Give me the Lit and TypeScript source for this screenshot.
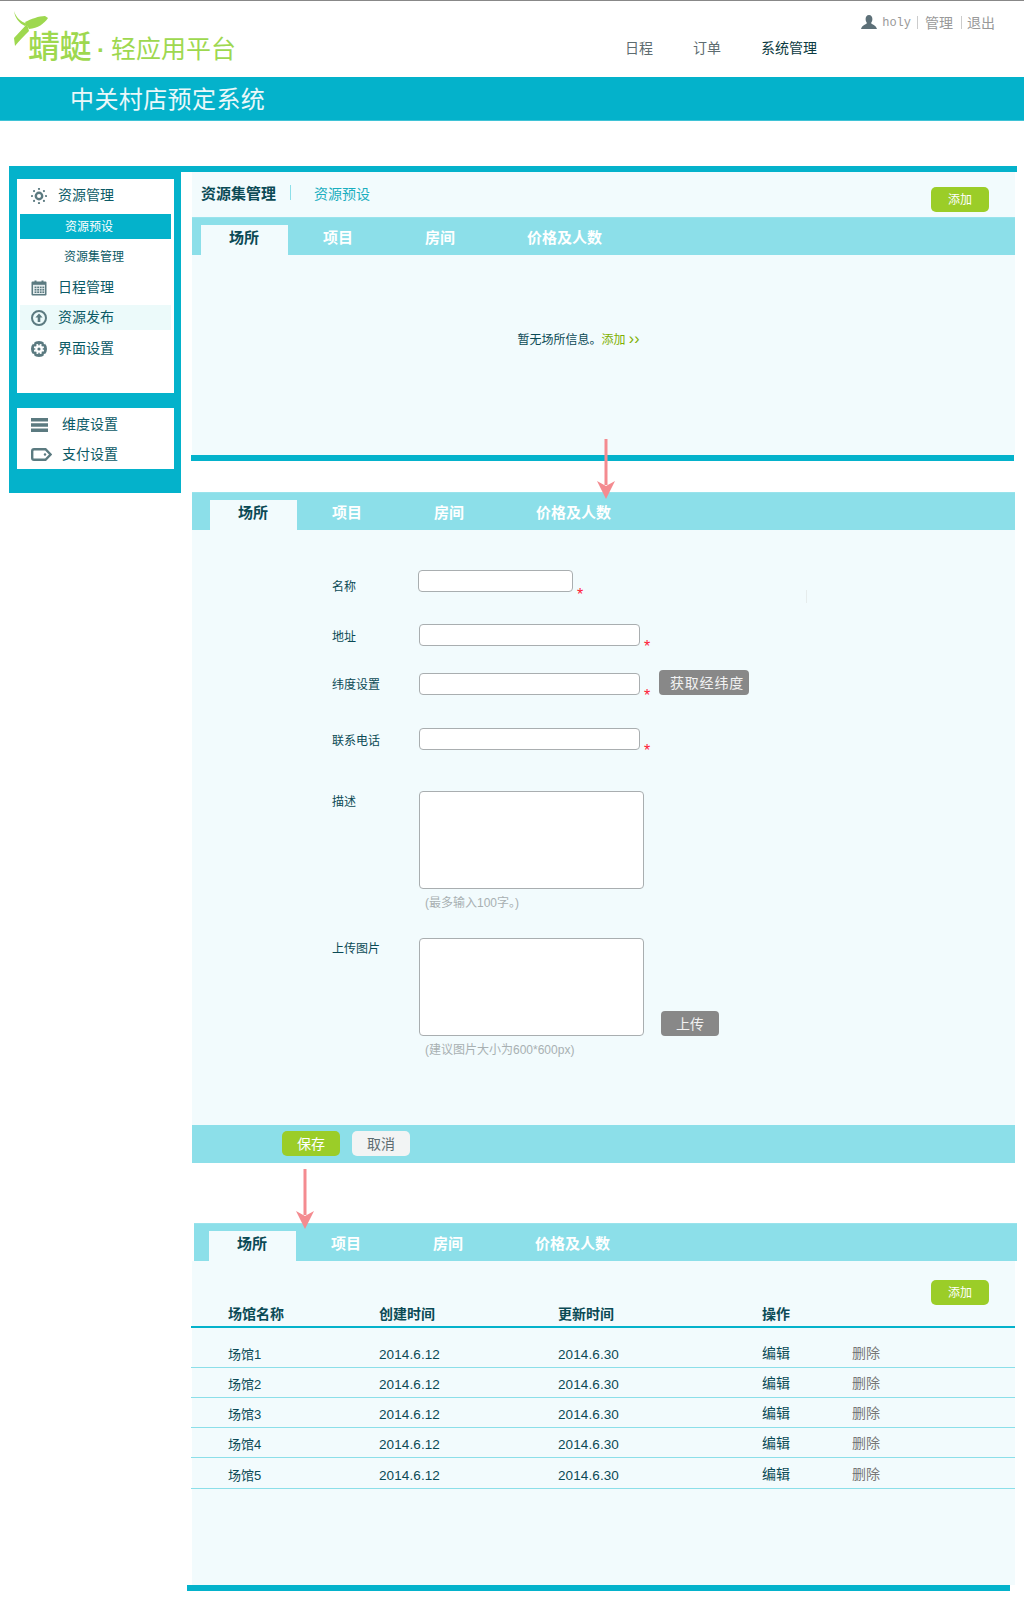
import { LitElement, html, css, svg } from 'lit';
import { customElement } from 'lit/decorators.js';
import { classMap } from 'lit/directives/class-map.js';

const TABS = ['场所', '项目', '房间', '价格及人数'];
const VENUES = ['场馆1', '场馆2', '场馆3', '场馆4', '场馆5'];

const gearDots = [0, 45, 90, 135, 180, 225, 270, 315];
const rad = (a: number) => (a * Math.PI) / 180;
const gridCols = [3.6, 6.2, 8.8, 11.4];
const gridRows = [6.6, 9, 11.4];

const icons = {
  sun: svg`<svg class="icon" width="16" height="16" viewBox="0 0 16 16"><circle cx="8" cy="8" r="3.2" fill="none" stroke="#5b7a80" stroke-width="2.4"/>${gearDots.map(
    (a) =>
      svg`<circle cx="${8 + 7 * Math.cos(rad(a))}" cy="${8 + 7 * Math.sin(rad(a))}" r="1.1" fill="#5b7a80"/>`
  )}</svg>`,
  calendar: svg`<svg class="icon" width="16" height="16" viewBox="0 0 16 16"><path d="M1.5 1.5h2V0.5h2v1h5V0.5h2v1h2a1 1 0 0 1 1 1v12a1 1 0 0 1-1 1H1.5a1 1 0 0 1-1-1v-12a1 1 0 0 1 1-1z" fill="#5b7a80"/><rect x="2" y="4.8" width="12" height="9.2" fill="#e4eced"/>${gridRows.map((y) =>
    gridCols.map(
      (x) => svg`<rect x="${x}" y="${y}" width="1.8" height="1.6" fill="#5b7a80"/>`
    )
  )}</svg>`,
  upload: svg`<svg class="icon" width="16" height="16" viewBox="0 0 16 16"><circle cx="8" cy="8" r="7" fill="none" stroke="#5b7a80" stroke-width="2"/><path d="M8 3.6L11.6 7.6H9.3V12H6.7V7.6H4.4z" fill="#5b7a80"/></svg>`,
  cog: svg`<svg class="icon" width="16" height="16" viewBox="0 0 16 16"><circle cx="8" cy="8" r="8" fill="#5b7a80"/><g fill="#fff"><circle cx="8" cy="8" r="3.8"/>${gearDots.map(
    (a) =>
      svg`<circle cx="${8 + 4.3 * Math.cos(rad(a + 22))}" cy="${8 + 4.3 * Math.sin(rad(a + 22))}" r="1.1"/>`
  )}${[45, 135, 225, 315].map(
    (a) =>
      svg`<circle cx="${8 + 8 * Math.cos(rad(a))}" cy="${8 + 8 * Math.sin(rad(a))}" r="1"/>`
  )}</g><circle cx="8" cy="8" r="1.6" fill="#5b7a80"/></svg>`,
  bars: svg`<svg class="icon wide" width="17" height="14" viewBox="0 0 17 14"><path d="M0 0h17v3.4H0zM0 5.2h17v3.6H0zM0 10.6h17V14H0z" fill="#5b7a80"/></svg>`,
  tag: svg`<svg class="icon tag" width="21" height="13" viewBox="0 0 21 13"><path d="M3 1.2H14.5L19.6 6.5L14.5 11.8H3A1.8 1.8 0 0 1 1.2 10V3A1.8 1.8 0 0 1 3 1.2z" fill="none" stroke="#5b7a80" stroke-width="2.4"/><circle cx="14" cy="6.5" r="1.2" fill="#5b7a80"/></svg>`,
};

@customElement('app-root')
export class AppRoot extends LitElement {
  static styles = css`
    :host {
      display: block;
      position: relative;
      width: 1024px;
      height: 1616px;
      overflow: hidden;
      background: #fff;
      font-family: 'Liberation Sans', 'Noto Sans CJK SC', sans-serif;
      font-size: 12px;
      color: #0b4a55;
    }
    /* header */
    header {
      display: flex;
      height: 76px;
      border-top: 1px solid #888;
    }
    .logo {
      position: relative;
      width: 240px;
      flex: none;
      display: flex;
      align-items: baseline;
      padding: 28px 0 0 28px;
      box-sizing: border-box;
      color: #9ed84f;
      line-height: 36px;
    }
    .logo b {
      font-size: 32px;
      font-weight: 500;
      letter-spacing: -0.5px;
    }
    .logo i {
      font-style: normal;
      font-size: 24px;
      font-weight: 700;
      width: 20px;
      text-align: center;
    }
    .logo span {
      font-size: 25px;
      font-weight: 400;
    }
    .logo svg {
      position: absolute;
      left: 0;
      top: 0;
    }
    .head-right {
      flex: 1;
      display: flex;
      flex-direction: column;
    }
    .user {
      display: flex;
      align-items: center;
      justify-content: flex-end;
      height: 16px;
      margin-top: 13px;
      padding-right: 29px;
      font-size: 14px;
      color: #999;
    }
    .user svg {
      margin-right: 5px;
    }
    .user .name {
      font-family: 'Liberation Mono', monospace;
      font-size: 12px;
      margin: 2px 6px 0 0;
    }
    .user .sep {
      width: 1px;
      height: 13px;
      background: #ccc;
    }
    .user .gap1 {
      margin-right: 7px;
    }
    .user .gap2 {
      margin: 0 5px 0 8px;
    }
    nav {
      display: flex;
      gap: 40px;
      margin-top: 9px;
      padding-left: 385px;
      font-size: 14px;
      line-height: 18px;
      color: #5d6c70;
    }
    nav .on {
      color: #0b3a42;
    }
    .band {
      height: 44px;
      box-sizing: border-box;
      padding: 2px 0 0 70px;
      background: #04b2cb;
      border-bottom: 1px solid #3fc3d6;
      color: #eaf8fa;
      font-size: 24px;
      letter-spacing: 0.4px;
      line-height: 41px;
    }
    /* frame */
    .frame {
      display: flex;
      align-items: flex-start;
      width: 1008px;
      margin: 45px 0 0 9px;
      border-top: 6px solid #04b2cb;
    }
    aside {
      flex: none;
      width: 172px;
      height: 321px;
      box-sizing: border-box;
      padding: 7px 7px 0 8px;
      background: #04b2cb;
    }
    .menu {
      background: #fff;
      height: 214px;
      padding: 4px 3px 0;
      box-sizing: border-box;
      color: #0b5a66;
      font-size: 14px;
    }
    .menu.second {
      height: 61px;
      margin-top: 15px;
      padding-top: 4px;
    }
    .item {
      display: flex;
      align-items: center;
      height: 25px;
      margin-bottom: 6px;
      padding-left: 11px;
      line-height: 25px;
    }
    .item .icon {
      flex: none;
      margin-right: 11px;
    }
    .menu.second .item {
      margin-bottom: 5px;
    }
    .menu.second .icon {
      margin-right: 14px;
    }
    .menu.second .icon.tag {
      margin-right: 10px;
    }
    .sub {
      height: 25px;
      margin-bottom: 5px;
      font-size: 12px;
      line-height: 27px;
      padding-left: 45px;
    }
    .sub.on {
      background: #04b2cb;
      color: #fff;
      padding-left: 45px;
    }
    .sub.off {
      margin-bottom: 6px;
      padding-left: 44px;
    }
    .item.cal {
      margin-bottom: 5px;
    }
    .item.hover {
      background: #ecfafa;
    }
    main {
      flex: none;
      width: 826px;
      margin-left: 11px;
    }
    .crumbs {
      display: flex;
      align-items: center;
      width: 823px;
      height: 45px;
      box-sizing: border-box;
      padding: 0 0 4px 9px;
      background: #f2fbfd;
      font-size: 14px;
    }
    .crumbs b {
      font-size: 15px;
      font-weight: 700;
    }
    .crumbs .div {
      width: 1px;
      height: 15px;
      margin: 0 23px 0 14px;
      background: #8ddfe9;
    }
    .crumbs .link {
      flex: 1;
      color: #1aaebf;
    }
    .add {
      flex: none;
      width: 58px;
      height: 25px;
      border-radius: 5px;
      background: #9bcd28;
      color: #fff;
      font-size: 12px;
      line-height: 27px;
      text-align: center;
    }
    .crumbs .add {
      margin: 14px 26px 0 0;
    }
    .tabs {
      display: flex;
      width: 823px;
      height: 38px;
      box-sizing: border-box;
      padding: 7px 0 0 9px;
      background: #8cdfe9;
      border-top: 1px solid #99e3ec;
      color: #fff;
      font-size: 15px;
      font-weight: 700;
      line-height: 26px;
    }
    .tabs span {
      padding: 0 36px;
    }
    .tabs span.active {
      padding: 0 29px 0 28px;
      margin-right: -1px;
      background: #f2fbfd;
      color: #0b4a55;
    }
    .tabs.b {
      padding-left: 18px;
    }
    .tabs.c {
      margin-left: 2px;
      padding-left: 15px;
    }
    .empty {
      display: flex;
      align-items: center;
      justify-content: center;
      width: 823px;
      height: 200px;
      background: #f2fbfd;
      box-sizing: border-box;
      padding: 0 50px 34px 0;
    }
    .empty em {
      font-style: normal;
      color: #7fb000;
    }
    .empty em i {
      font-style: normal;
      font-size: 16px;
      line-height: 14px;
    }
    .rule {
      height: 6px;
      width: 823px;
      margin-left: -1px;
      background: #04b2cb;
    }
    .rule.last {
      margin-left: -5px;
    }
    /* form */
    form {
      width: 823px;
      height: 595px;
      box-sizing: border-box;
      padding: 40px 0 0 140px;
      background: #f2fbfd;
    }
    .row {
      display: flex;
      align-items: flex-start;
    }
    .row label {
      flex: none;
      width: 87px;
      line-height: 16px;
      color: #0b4a55;
    }
    .field {
      box-sizing: border-box;
      flex: none;
      width: 221px;
      height: 22px;
      background: #fff;
      border: 1px solid #a9aeb0;
      border-radius: 4px;
    }
    .star {
      flex: none;
      align-self: flex-end;
      width: 6px;
      margin: 0 0 -3px 4px;
      height: 10px;
      line-height: 15px;
      font-size: 16px;
      color: #ff2035;
    }
    .row.name {
      height: 22px;
    }
    .row.name .star {
      margin-bottom: -5px;
    }
    .row.name label {
      width: 86px;
      margin-top: 9px;
    }
    .row.name .field {
      width: 155px;
    }
    .row.addr {
      margin-top: 32px;
    }
    .row.addr label,
    .row.tel label {
      margin-top: 5px;
    }
    .row.lat {
      margin-top: 27px;
    }
    .row.lat label {
      margin-top: 4px;
    }
    .row.tel {
      margin-top: 33px;
    }
    .row.area {
      margin-top: 41px;
    }
    .row.area label {
      margin-top: 3px;
    }
    .row.area .field {
      width: 225px;
      height: 98px;
    }
    .row.photo {
      margin-top: 27px;
      align-items: flex-start;
    }
    .tick {
      flex: none;
      width: 1px;
      height: 13px;
      margin: 20px 0 0 223px;
      background: #e6ecec;
    }
    .grey {
      flex: none;
      height: 25px;
      border-radius: 4px;
      background: #888;
      color: #f2f2f2;
      font-size: 14px;
      line-height: 27px;
      text-align: center;
    }
    .grey.geo {
      width: 90px;
      box-sizing: border-box;
      padding-left: 6px;
      margin: -3px 0 0 9px;
      letter-spacing: 0.8px;
    }
    .grey.up {
      width: 58px;
      align-self: flex-end;
      margin-left: 17px;
    }
    .hint {
      margin: 6px 0 0 93px;
      line-height: 16px;
      color: #a8b0b2;
    }
    .foot {
      display: flex;
      gap: 12px;
      width: 823px;
      height: 38px;
      box-sizing: border-box;
      padding: 6px 0 0 90px;
      background: #8cdfe9;
    }
    .foot span {
      width: 58px;
      height: 25px;
      border-radius: 5px;
      font-size: 14px;
      line-height: 26px;
      text-align: center;
    }
    .foot .save {
      background: #9bcd28;
      color: #fff;
    }
    .foot .cancel {
      background: #f2f4f4;
      color: #5d6c70;
    }
    .gap-a {
      height: 31px;
    }
    .gap-b {
      height: 60px;
    }
    /* table */
    .list {
      width: 823px;
      height: 324px;
      box-sizing: border-box;
      padding-top: 19px;
      background: #f2fbfd;
    }
    .list .add {
      margin-left: 739px;
    }
    .tr {
      display: grid;
      grid-template-columns: 151px 179px 204px 90px 1fr;
      align-items: end;
      margin-left: -1px;
      padding: 0 0 4px 37px;
      height: 30px;
      box-sizing: border-box;
      border-bottom: 1px solid #8cdfe9;
      font-size: 13px;
      line-height: 16px;
    }
    .tr.head {
      height: 23px;
      padding-bottom: 4px;
      border-bottom: 2px solid #04b2cb;
      font-weight: 700;
      font-size: 14px;
    }
    .tr.first {
      height: 40px;
    }
    .tr.last {
      height: 31px;
    }
    .tr .num {
      font-size: 13.5px;
      letter-spacing: 0.1px;
    }
    .tr .op {
      font-size: 14px;
      margin-bottom: 2px;
    }
    .tr .del {
      color: #777;
    }
    .arrow {
      position: absolute;
    }
    .arrow.one {
      left: 597px;
      top: 439px;
    }
    .arrow.two {
      left: 296px;
      top: 1169px;
    }
  `;

  private tabs(variant: string) {
    return html`<div class="tabs ${variant}">
      ${TABS.map(
        (t, i) =>
          html`<span class=${classMap({ active: i === 0 })}>${t}</span>`
      )}
    </div>`;
  }

  private arrow(variant: string) {
    return html`<svg
      class="arrow ${variant}"
      width="18"
      height="60"
      viewBox="0 0 18 60"
    >
      <rect x="7.5" y="0" width="3" height="46" fill="#f48b90" />
      <path d="M0 42L9 47L18 42L9 60z" fill="#f48b90" />
    </svg>`;
  }

  private renderHeader() {
    return html`<header>
        <div class="logo">
          <svg width="60" height="50" viewBox="0 0 60 50">
            <path
              d="M14 10C16 16 20 21 28 23L25 25C19 22 15 17 14 10z"
              fill="#9ed84f"
            />
            <path
              d="M25 21C31 18 39 15 45 15L48 17C44 23 38 27 29 28z"
              fill="#9ed84f"
            />
            <path
              d="M27 23L14 37L15 45C19 40 24 35 29 30z"
              fill="#9ed84f"
            />
          </svg>
          <b>蜻蜓</b><i>·</i><span>轻应用平台</span>
        </div>
        <div class="head-right">
          <div class="user">
            <svg width="16" height="14" viewBox="0 0 16 14">
              <path
                d="M8 0C10.2 0 11.4 1.7 11.4 4C11.4 6 10.5 7.4 10 8C10.6 9.6 15 10 16 14H0C1 10 5.4 9.6 6 8C5.5 7.4 4.6 6 4.6 4C4.6 1.7 5.8 0 8 0z"
                fill="#5d7078"
              />
            </svg>
            <span class="name">holy</span><span class="sep gap1"></span>
            <span>管理</span><span class="sep gap2"></span><span>退出</span>
          </div>
          <nav>
            <span>日程</span><span>订单</span><span class="on">系统管理</span>
          </nav>
        </div>
      </header>
      <div class="band">中关村店预定系统</div>`;
  }

  private renderSidebar() {
    return html`<aside>
      <div class="menu">
        <div class="item">${icons.sun}资源管理</div>
        <div class="sub on">资源预设</div>
        <div class="sub off">资源集管理</div>
        <div class="item cal">${icons.calendar}日程管理</div>
        <div class="item hover">${icons.upload}资源发布</div>
        <div class="item">${icons.cog}界面设置</div>
      </div>
      <div class="menu second">
        <div class="item">${icons.bars}维度设置</div>
        <div class="item">${icons.tag}支付设置</div>
      </div>
    </aside>`;
  }

  private renderForm() {
    return html`<form>
      <div class="row name">
        <label>名称</label><span class="field"></span
        ><span class="star">*</span><span class="tick"></span>
      </div>
      <div class="row addr">
        <label>地址</label><span class="field"></span
        ><span class="star">*</span>
      </div>
      <div class="row lat">
        <label>纬度设置</label><span class="field"></span
        ><span class="star">*</span><span class="grey geo">获取经纬度</span>
      </div>
      <div class="row tel">
        <label>联系电话</label><span class="field"></span
        ><span class="star">*</span>
      </div>
      <div class="row area">
        <label>描述</label><span class="field"></span>
      </div>
      <div class="hint">(最多输入100字。)</div>
      <div class="row area photo">
        <label>上传图片</label><span class="field"></span
        ><span class="grey up">上传</span>
      </div>
      <div class="hint">(建议图片大小为600*600px)</div>
    </form>`;
  }

  private renderTable() {
    return html`<div class="list">
      <div class="add">添加</div>
      <div class="tr head">
        <span>场馆名称</span><span>创建时间</span><span>更新时间</span
        ><span>操作</span>
      </div>
      ${VENUES.map(
        (v, i) => html`<div
          class=${classMap({
            tr: true,
            first: i === 0,
            last: i === VENUES.length - 1,
          })}
        >
          <span>${v}</span><span class="num">2014.6.12</span
          ><span class="num">2014.6.30</span><span class="op">编辑</span
          ><span class="op del">删除</span>
        </div>`
      )}
    </div>`;
  }

  render() {
    return html`
      ${this.renderHeader()}
      <div class="frame">
        ${this.renderSidebar()}
        <main>
          <div class="crumbs">
            <b>资源集管理</b><span class="div"></span
            ><span class="link">资源预设</span><span class="add">添加</span>
          </div>
          ${this.tabs('a')}
          <div class="empty">暂无场所信息。<em>添加 <i>››</i></em></div>
          <div class="rule"></div>
          <div class="gap-a"></div>
          ${this.tabs('b')} ${this.renderForm()}
          <div class="foot">
            <span class="save">保存</span><span class="cancel">取消</span>
          </div>
          <div class="gap-b"></div>
          ${this.tabs('c')} ${this.renderTable()}
          <div class="rule last"></div>
        </main>
      </div>
      ${this.arrow('one')} ${this.arrow('two')}
    `;
  }
}
